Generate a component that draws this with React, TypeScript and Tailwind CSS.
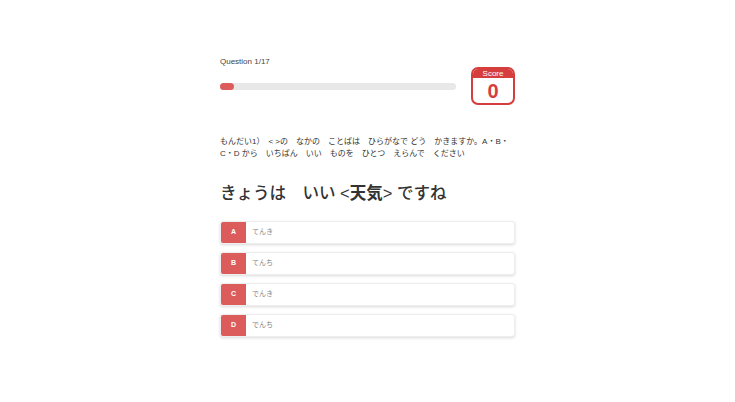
import React from 'react';

const options = [
  { letter: 'A', text: 'てんき' },
  { letter: 'B', text: 'てんち' },
  { letter: 'C', text: 'でんき' },
  { letter: 'D', text: 'でんち' },
];

const font = { fontFamily: '"Liberation Sans", "Noto Sans CJK JP", sans-serif' };

export default function App() {
  return (
    <div className="min-h-screen bg-white" style={font}>
      <div className="mx-auto w-[295px] pt-[57px]">
        {/* Header: progress + score */}
        <div className="flex items-start justify-between">
          <div className="w-[236px]">
            <p className="text-[8px] leading-[10px] text-[#444]">Question 1/17</p>
            <div className="mt-[16px] h-[7px] w-full rounded-full bg-[#e8e8e8]">
              <div className="h-full w-[14px] rounded-full bg-[#dc5c5c]" />
            </div>
          </div>
          <div className="mt-[10px] flex h-[38px] w-[44px] flex-col overflow-hidden rounded-[7px] border-2 border-[#d63e3e] bg-white">
            <div className="flex h-[9px] items-center justify-center bg-[#d63e3e] text-[8px] leading-none text-white">
              Score
            </div>
            <div className="flex flex-1 items-center justify-center text-[20px] font-bold leading-none text-[#d63e3e]">
              0
            </div>
          </div>
        </div>

        {/* Instructions */}
        <p className="mt-[31px] text-[8px] leading-[12px] text-[#333]">
          もんだい1）　&lt; &gt;の　なかの　ことばは　ひらがなで どう　かきますか。A・B・C・D から　いちばん　いい　ものを　ひとつ　えらんで　ください
        </p>

        {/* Question */}
        <h1 className="mt-[23px] text-[16.5px] font-medium leading-[20px] text-[#333]">
          きょうは　いい &lt;<span className="font-bold">天気</span>&gt; ですね
        </h1>

        {/* Options */}
        <div className="mt-[18px] flex flex-col gap-[8px]">
          {options.map((o) => (
            <div
              key={o.letter}
              className="flex h-[23px] overflow-hidden rounded-[3px] border border-[#eee] bg-white shadow-[0_1px_3px_rgba(0,0,0,0.15)]"
            >
              <div className="flex w-[25px] items-center justify-center bg-[#dc5c5c] text-[7px] font-bold text-white">
                {o.letter}
              </div>
              <div className="flex items-center pl-[6px] text-[7px] text-[#888]">{o.text}</div>
            </div>
          ))}
        </div>
      </div>
    </div>
  );
}
